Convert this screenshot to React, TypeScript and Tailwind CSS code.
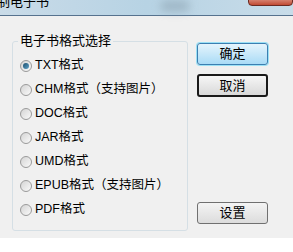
import React from "react";

const formats = [
  "TXT格式",
  "CHM格式（支持图片）",
  "DOC格式",
  "JAR格式",
  "UMD格式",
  "EPUB格式（支持图片）",
  "PDF格式",
];

function Radio({ checked }: { checked?: boolean }) {
  return (
    <span className="flex h-[12px] w-[12px] shrink-0 items-center justify-center rounded-full border border-[#9a9a9a] bg-gradient-to-br from-[#d4d4d4] to-[#fafafa]">
      {checked && <span className="h-[6px] w-[6px] rounded-full bg-gradient-to-br from-[#1b4f6e] to-[#5fa3c9]" />}
    </span>
  );
}

export default function App() {
  return (
    <div
      className="relative h-[252px] w-[293px] overflow-hidden bg-white text-[12px] text-black"
      style={{ fontFamily: '"Liberation Sans", "Noto Sans CJK SC", sans-serif' }}
    >
      {/* title bar */}
      <div className="relative h-[16px] border-b border-[#56728e] bg-gradient-to-r from-[#c9dbe8] via-[#b7d3e4] to-[#c8dce9]">
        <span className="absolute -left-[3px] -top-[5px] text-[13px] leading-none">制电子书</span>
        <span className="absolute left-[160px] top-[0px] h-[12px] w-[30px] rounded-full bg-[#8fa6b5] opacity-60 blur-[4px]" />
        <span className="absolute -top-[2px] right-[0px] h-[8px] w-[45px] rounded-b-[4px] border border-[#6b2a22] bg-gradient-to-b from-[#d98a7a] to-[#c04a33]" />
      </div>

      {/* body */}
      <div className="flex h-[222px] gap-[9px] bg-[#f0f0f0] pl-[12px] pt-[18px]">
        <fieldset className="h-[197px] w-[176px] rounded-[3px] border border-[#d5dfe5] px-[7px] pt-[9px]">
          <legend className="-ml-[2px] px-[2px] text-[13px] leading-[14px]">电子书格式选择</legend>
          <div className="flex flex-col gap-[7px]">
            {formats.map((f, i) => (
              <div key={f} className="flex h-[17px] items-center gap-[3px] whitespace-nowrap">
                <Radio checked={i === 0} />
                <span className="text-[12.5px] leading-none">{f}</span>
              </div>
            ))}
          </div>
        </fieldset>

        <div className="flex flex-col pt-[9px]">
          <button className="h-[22px] w-[71px] rounded-[3px] border border-[#3c7fb1] bg-gradient-to-b from-[#e5f4fc] to-[#a9dbf6] text-[13px] shadow-[0_0_0_1px_#9be0f5]">
            确定
          </button>
          <button className="mt-[9px] h-[23px] w-[71px] rounded-[3px] border-2 border-[#1a1a1a] bg-gradient-to-b from-[#f6f6f6] to-[#d9d9d9] text-[13px]">
            取消
          </button>
          <button className="mt-[105px] h-[22px] w-[71px] rounded-[3px] border border-[#707070] bg-gradient-to-b from-[#f4f4f4] to-[#dcdcdc] text-[13px]">
            设置
          </button>
        </div>
      </div>
    </div>
  );
}
